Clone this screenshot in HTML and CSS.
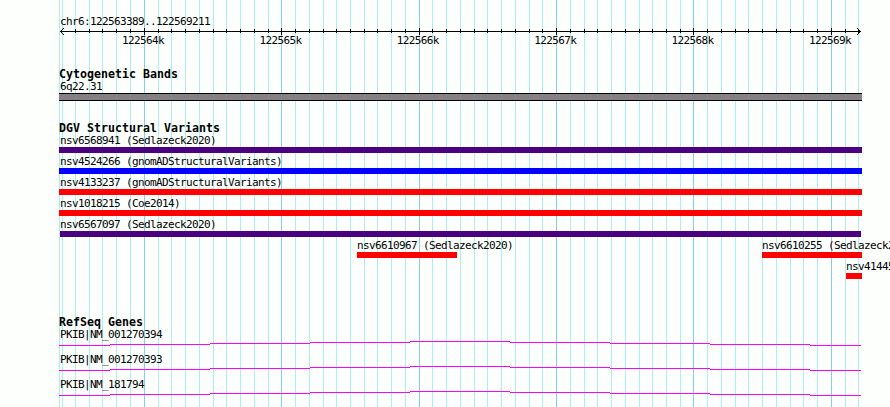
FILE: index.html
```
<!DOCTYPE html>
<html lang="en">
<head>
<meta charset="utf-8">
<title>chr6:122563389..122569211</title>
<link rel="stylesheet" href="styles.css">
<script src="browser.js" defer></script>
</head>
<body>
<main class="browser">
  <svg class="grid" width="890" height="407" aria-hidden="true"><path class="minor"/><path class="major"/></svg>
  <section class="overview">
    <div class="label">chr6:122563389..122569211</div>
    <svg class="axis" width="803" height="7" viewBox="59 28 803 7" aria-hidden="true"><path class="ticks"/><path class="arrow" d="M64 28h-1v1h-1v1h-1v1h-1v1h1v1h1v1h1v1h1v-1h-1v-1h-1v-1h-1v-1h1v-1h1v-1h1zM857 28h1v1h1v1h1v1h1v1h-1v1h-1v1h-1v1h-1v-1h1v-1h1v-1h1v-1h-1v-1h-1v-1h-1z"/></svg>
    <div class="scale"><span>122564k</span><span>122565k</span><span>122566k</span><span>122567k</span><span>122568k</span><span>122569k</span></div>
  </section>
  <section class="bands">
    <h2>Cytogenetic Bands</h2>
    <div class="label">6q22.31</div>
    <div class="band"></div>
  </section>
  <section class="variants">
    <h2>DGV Structural Variants</h2>
    <div class="variant"><div class="label">nsv6568941 (Sedlazeck2020)</div><div class="bar indigo"></div></div>
    <div class="variant"><div class="label">nsv4524266 (gnomADStructuralVariants)</div><div class="bar blue"></div></div>
    <div class="variant"><div class="label">nsv4133237 (gnomADStructuralVariants)</div><div class="bar red"></div></div>
    <div class="variant"><div class="label">nsv1018215 (Coe2014)</div><div class="bar red"></div></div>
    <div class="variant"><div class="label">nsv6567097 (Sedlazeck2020)</div><div class="bar indigo inset"></div></div>
    <div class="variant pair">
      <div class="feature middle"><div class="label">nsv6610967 (Sedlazeck2020)</div><div class="bar red"></div></div>
      <div class="feature"><div class="label">nsv6610255 (Sedlazeck2020)</div><div class="bar red"></div></div>
    </div>
    <div class="variant last"><div class="label">nsv4144522 (gnomADStructuralVariants)</div><div class="bar red"></div></div>
  </section>
  <section class="genes">
    <h2>RefSeq Genes</h2>
    <div class="gene"><div class="label">PKIB|NM_001270394</div><svg class="intron" width="802" height="5"><path/></svg></div>
    <div class="gene"><div class="label">PKIB|NM_001270393</div><svg class="intron" width="802" height="5"><path/></svg></div>
    <div class="gene"><div class="label">PKIB|NM_181794</div><svg class="intron" width="802" height="5"><path/></svg></div>
  </section>
</main>
</body>
</html>
```
FILE: styles.css
```
body {
  margin: 0;
  background: #fdfffc;
  overflow: hidden;
}
.browser {
  position: relative;
  box-sizing: border-box;
  width: 890px;
  height: 407px;
  padding: 15px 28px 0 59px;
  overflow: hidden;
  color: #000;
  font: 11px/14px "DejaVu Sans Mono", monospace;
  letter-spacing: -0.622px;
}
svg {
  display: block;
  shape-rendering: crispEdges;
}
.grid {
  position: absolute;
  inset: 0;
}
.minor { fill: #afeeee; }
.major { fill: #87ceeb; }
section { position: relative; }
.label {
  height: 12px;
  padding-left: 1px;
  white-space: pre;
}
h2 {
  height: 12px;
  margin: 0;
  font-size: 11.6px;
  line-height: 12px;
  letter-spacing: 0.017px;
}
.overview { height: 53px; }
.axis { margin-top: 1px; }
.scale {
  display: flex;
  justify-content: space-between;
  width: 729px;
  margin: -1px 0 0 63px;
}
.bands { height: 54px; }
.band {
  box-sizing: border-box;
  height: 8px;
  margin-top: 1px;
  border: solid #000;
  border-width: 1px 0;
  background: #858085;
}
.variants { height: 194px; }
.variant { height: 21px; }
.bar {
  height: 6px;
  margin-top: 1px;
}
.indigo { background: #4b0082; }
.blue { background: #00f; }
.red { background: #f00; }
.inset { margin-inline: 1px; }
.pair {
  display: flex;
  justify-content: space-between;
  padding-left: 298px;
}
.feature { width: 100px; }
.variant .feature .label,
.last .label { padding-left: 0; }
.last { margin-left: 787px; }
.gene { height: 25px; }
.intron { margin-top: 1px; }
.intron path { fill: #f0f; }
```
FILE: browser.js
```
const major = [144, 281, 419, 556, 693, 831];
const minor = [59, 62, 75, 89, 102, 116, 130, 158, 171, 185, 199, 213, 226, 240, 254, 268,
  295, 309, 323, 336, 350, 364, 377, 391, 405, 432, 446, 460, 474, 487, 501, 515, 529, 542,
  570, 584, 597, 611, 625, 639, 652, 666, 680, 707, 721, 735, 748, 762, 776, 790, 803, 817, 845, 858];
const lines = (xs, y, h) => xs.map(x => `M${x} ${y}h1v${h}h-1z`).join("");
document.querySelector(".minor").setAttribute("d", lines(minor, 0, 407));
document.querySelector(".major").setAttribute("d", lines(major, 0, 407));
document.querySelector(".ticks").setAttribute("d",
  "M60 31h801v1h-801z" + lines(minor.slice(2), 29, 4) + lines(major, 28, 7));

// Intron arcs rise and fall by one pixel per segment.
const edges = [0, 51, 151, 251, 351, 451, 551, 651, 751, 802];
const arc = [4, 3, 2, 1, 0, 1, 2, 3, 4]
  .map((y, i) => `M${edges[i]} ${y}H${edges[i + 1]}v1H${edges[i]}z`).join("");
document.querySelectorAll(".intron path").forEach(path => path.setAttribute("d", arc));
```
